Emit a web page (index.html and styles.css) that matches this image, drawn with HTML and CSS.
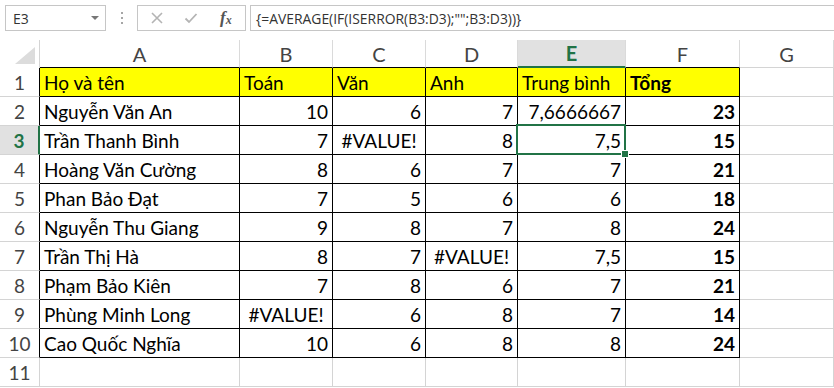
FILE: index.html
```html
<!doctype html>
<html>
<head>
  <title>Bảng điểm</title>
  <link rel="stylesheet" href="styles.css">
</head>
<body>
  <!-- Name box, grip and formula input -->
  <div class="formula-bar">
    <div class="namebox">
      <span>E3</span>
      <span class="caret"></span>
    </div>
    <div class="grip"><i></i><i></i><i></i></div>
    <div class="actions">
      <svg width="14" height="14" viewBox="0 0 14 14"><path d="M2 2 L12 12 M12 2 L2 12" stroke="#b4b4b4" stroke-width="1.6" fill="none"/></svg>
      <svg width="14" height="14" viewBox="0 0 14 14"><path d="M1.5 7.5 L5 11 L12.5 3" stroke="#b4b4b4" stroke-width="1.8" fill="none"/></svg>
      <span class="fx">f<sub>x</sub></span>
    </div>
    <div class="formula">{=AVERAGE(IF(ISERROR(B3:D3);"";B3:D3))}</div>
  </div>

  <div class="sheet">
    <div class="corner"></div>
    <div class="ch">A</div>
    <div class="ch">B</div>
    <div class="ch">C</div>
    <div class="ch">D</div>
    <div class="ch active">E</div>
    <div class="ch">F</div>
    <div class="ch last">G</div>

    <div class="rh t">1</div>
    <div class="cell t hd">Họ và tên</div>
    <div class="cell t hd">Toán</div>
    <div class="cell t hd">Văn</div>
    <div class="cell t hd">Anh</div>
    <div class="cell t hd">Trung bình</div>
    <div class="cell t hd b">Tổng</div>
    <div class="cell"></div>

    <div class="rh t">2</div>
    <div class="cell t">Nguyễn Văn An</div>
    <div class="cell t num">10</div>
    <div class="cell t num">6</div>
    <div class="cell t num">7</div>
    <div class="cell t num">7,6666667</div>
    <div class="cell t num b">23</div>
    <div class="cell"></div>

    <div class="rh t active">3</div>
    <div class="cell t">Trần Thanh Bình</div>
    <div class="cell t num">7</div>
    <div class="cell t err">#VALUE!</div>
    <div class="cell t num">8</div>
    <div class="cell t num sel">7,5</div>
    <div class="cell t num b">15</div>
    <div class="cell"></div>

    <div class="rh t">4</div>
    <div class="cell t">Hoàng Văn Cường</div>
    <div class="cell t num">8</div>
    <div class="cell t num">6</div>
    <div class="cell t num">7</div>
    <div class="cell t num">7</div>
    <div class="cell t num b">21</div>
    <div class="cell"></div>

    <div class="rh t">5</div>
    <div class="cell t">Phan Bảo Đạt</div>
    <div class="cell t num">7</div>
    <div class="cell t num">5</div>
    <div class="cell t num">6</div>
    <div class="cell t num">6</div>
    <div class="cell t num b">18</div>
    <div class="cell"></div>

    <div class="rh t">6</div>
    <div class="cell t">Nguyễn Thu Giang</div>
    <div class="cell t num">9</div>
    <div class="cell t num">8</div>
    <div class="cell t num">7</div>
    <div class="cell t num">8</div>
    <div class="cell t num b">24</div>
    <div class="cell"></div>

    <div class="rh t">7</div>
    <div class="cell t">Trần Thị Hà</div>
    <div class="cell t num">8</div>
    <div class="cell t num">7</div>
    <div class="cell t err">#VALUE!</div>
    <div class="cell t num">7,5</div>
    <div class="cell t num b">15</div>
    <div class="cell"></div>

    <div class="rh t">8</div>
    <div class="cell t">Phạm Bảo Kiên</div>
    <div class="cell t num">7</div>
    <div class="cell t num">8</div>
    <div class="cell t num">6</div>
    <div class="cell t num">7</div>
    <div class="cell t num b">21</div>
    <div class="cell"></div>

    <div class="rh t">9</div>
    <div class="cell t">Phùng Minh Long</div>
    <div class="cell t err">#VALUE!</div>
    <div class="cell t num">6</div>
    <div class="cell t num">8</div>
    <div class="cell t num">7</div>
    <div class="cell t num b">14</div>
    <div class="cell"></div>

    <div class="rh t">10</div>
    <div class="cell t">Cao Quốc Nghĩa</div>
    <div class="cell t num">10</div>
    <div class="cell t num">6</div>
    <div class="cell t num">8</div>
    <div class="cell t num">8</div>
    <div class="cell t num b">24</div>
    <div class="cell"></div>

    <div class="rh">11</div>
    <div class="cell"></div>
    <div class="cell"></div>
    <div class="cell"></div>
    <div class="cell"></div>
    <div class="cell"></div>
    <div class="cell"></div>
    <div class="cell"></div>
  </div>
</body>
</html>
```

FILE: styles.css
```css
* {
  box-sizing: border-box;
  margin: 0;
  padding: 0;
}

html, body {
  width: 834px;
  height: 388px;
  overflow: hidden;
}

body {
  background: #fff;
  font-family: Lato, "Liberation Sans", sans-serif;
  color: #000;
}

/* ---- formula bar ---- */

.formula-bar {
  display: flex;
  align-items: flex-start;
  height: 40px;
  padding: 5px 0 0 5px;
  font-family: "Open Sans", "Noto Sans", sans-serif;
  color: #333;
}

.namebox,
.actions,
.formula {
  height: 26px;
  border: 1px solid #c6c6c6;
  display: flex;
  align-items: center;
}

.namebox {
  width: 101px;
  justify-content: space-between;
  padding: 0 6px 0 7px;
  font-size: 14px;
}

.caret {
  width: 0;
  height: 0;
  border-left: 4px solid transparent;
  border-right: 4px solid transparent;
  border-top: 4px solid #777;
}

.grip {
  width: 31px;
  height: 26px;
  display: flex;
  flex-direction: column;
  align-items: center;
  justify-content: center;
  gap: 3px;
}

.grip i {
  width: 2px;
  height: 2px;
  background: #a6a6a6;
}

.actions {
  width: 109px;
  padding: 0 0 0 12px;
  gap: 20px;
}

.fx {
  font-family: "Liberation Serif", serif;
  font-style: italic;
  font-weight: 700;
  font-size: 17px;
  color: #555;
  margin-left: 2px;
}

.fx sub {
  font-size: 12px;
  vertical-align: -1px;
}

.formula {
  flex: 1;
  margin-left: 4px;
  border-right: none;
  padding-left: 5px;
  font-size: 13.9px;
}

/* ---- sheet grid ---- */

.sheet {
  display: grid;
  grid-template-columns: 40px 200px 93px 93px 92px 108px 114px 94px;
  grid-template-rows: 28px;
  grid-auto-rows: 29px;
  font-size: 19px;
}

.corner {
  position: relative;
  border-right: 1px solid #d4d4d4;
}

.corner::after {
  content: "";
  position: absolute;
  right: 4px;
  bottom: 4px;
  border-left: 20px solid transparent;
  border-bottom: 17px solid #dcdcdc;
}

.ch,
.rh {
  display: flex;
  align-items: center;
  justify-content: center;
  color: #444;
  border-right: 1px solid #dadada;
  border-bottom: 1px solid #000;
}

.ch {
  font-size: 20px;
}

.ch.last {
  border-bottom-color: #d4d4d4;
}

.rh {
  border-right-color: #d4d4d4;
  border-bottom-color: #d4d4d4;
}

.rh.t {
  border-right-color: #000;
}

.ch.active,
.rh.active {
  background: #e1e1e1;
  color: #217346;
  font-weight: 700;
}

.ch.active {
  border-bottom: 2px solid #217346;
}

.rh.active {
  border-right: 2px solid #217346;
}

.cell {
  display: flex;
  align-items: center;
  padding: 1px 4px 0;
  white-space: nowrap;
  overflow: hidden;
  border-right: 1px solid #d4d4d4;
  border-bottom: 1px solid #d4d4d4;
}

.cell.t {
  border-right-color: #000;
  border-bottom-color: #000;
}

.hd { background: #ffff00; }
.num { justify-content: flex-end; }
.err { justify-content: center; }
.b { font-weight: 700; }

/* active cell frame and fill handle */
.sel {
  position: relative;
  overflow: visible;
}

.sel::before {
  content: "";
  position: absolute;
  left: -2px;
  top: -2px;
  right: -1px;
  bottom: -1px;
  border: 2px solid #217346;
}

.sel::after {
  content: "";
  position: absolute;
  right: -4px;
  bottom: -4px;
  width: 6px;
  height: 6px;
  background: #217346;
  border: 1px solid #fff;
}
```
